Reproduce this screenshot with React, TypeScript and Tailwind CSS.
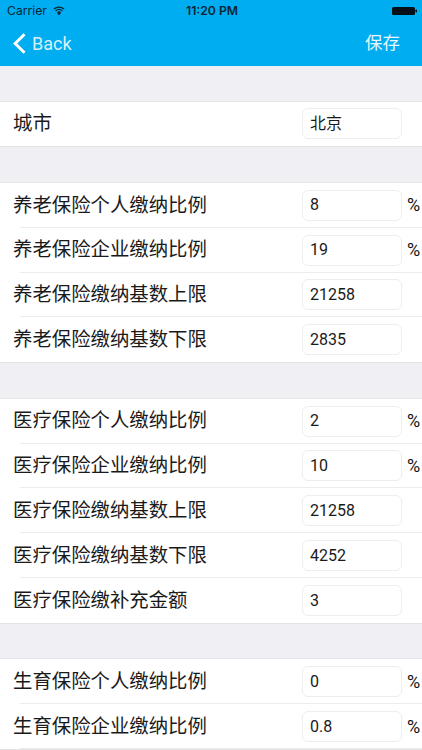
interface RowData {
  label: string
  value: string
  percent?: boolean
}

const groups: RowData[][] = [
  [{ label: '城市', value: '北京' }],
  [
    { label: '养老保险个人缴纳比例', value: '8', percent: true },
    { label: '养老保险企业缴纳比例', value: '19', percent: true },
    { label: '养老保险缴纳基数上限', value: '21258' },
    { label: '养老保险缴纳基数下限', value: '2835' },
  ],
  [
    { label: '医疗保险个人缴纳比例', value: '2', percent: true },
    { label: '医疗保险企业缴纳比例', value: '10', percent: true },
    { label: '医疗保险缴纳基数上限', value: '21258' },
    { label: '医疗保险缴纳基数下限', value: '4252' },
    { label: '医疗保险缴补充金额', value: '3' },
  ],
  [
    { label: '生育保险个人缴纳比例', value: '0', percent: true },
    { label: '生育保险企业缴纳比例', value: '0.8', percent: true },
  ],
]

function Row({ label, value, percent, last }: RowData & { last: boolean }) {
  return (
    <div className="relative flex h-[44.85px] items-center bg-white pl-[13px]">
      <span className="w-[289px] shrink-0 whitespace-nowrap text-[19.4px] leading-none text-[#1a1a1a]">{label}</span>
      <div className="flex h-[31px] w-[100px] shrink-0 items-center rounded-[6px] border border-[#eeeef0] pl-[7px] font-['Roboto','Noto_Sans_CJK_SC',sans-serif] text-[16px] text-[#1a1a1a]">
        {value}
      </div>
      {percent && <span className="ml-[5px] font-['Roboto',sans-serif] text-[18px] leading-none text-[#111]">%</span>}
      {!last && <div className="absolute right-0 bottom-0 left-[20px] h-px bg-[#ececee]" />}
    </div>
  )
}

export default function App() {
  return (
    <div className="h-[750px] w-[422px] overflow-hidden bg-[#efeff4] font-['Inter','Noto_Sans_CJK_SC',sans-serif]">
      <div className="h-[66px] bg-[#00adf1]">
        <div className="flex h-[22px] items-center justify-between pr-[5px] pl-[7px] text-[12.2px] text-[#0b2533]">
          <div className="flex w-[120px] items-center gap-[6px]">
            <span>Carrier</span>
            <svg width="12" height="9" viewBox="0 0 14 10" fill="none" stroke="#0b2533" strokeWidth="1.5">
              <path d="M1 3.4C4.4.4 9.6.4 13 3.4" />
              <path d="M3 5.5c2.3-2 5.7-2 8 0" />
              <path d="M5 7.5c1.2-1 2.8-1 4 0" />
              <path d="M6 8.4 7 9.6l1-1.2c-.6-.4-1.4-.4-2 0z" fill="#0b2533" />
            </svg>
          </div>
          <span className="font-semibold">11:20 PM</span>
          <div className="flex w-[120px] justify-end">
            <svg width="25" height="10" viewBox="0 0 25 10">
              <rect x="0" y="1" width="23" height="8" rx="1.5" fill="#061018" />
              <rect x="23.5" y="3.5" width="1.5" height="3" rx="0.7" fill="#061018" />
            </svg>
          </div>
        </div>
        <div className="flex h-[43px] items-center justify-between pr-[22px] pl-[13px]">
          <div className="flex items-center gap-[6px]">
            <svg width="13" height="21" viewBox="0 0 13 21" fill="none" stroke="#ffffff" strokeWidth="3">
              <path d="M11.5 1.2 2.2 10.5l9.3 9.3" />
            </svg>
            <span className="font-['Roboto',sans-serif] text-[18px] text-[#d5f1fc]">Back</span>
          </div>
          <span className="text-[17.5px] text-[#e6f7fe]">保存</span>
        </div>
      </div>
      <div className="flex flex-col gap-[36.5px] pt-[35.5px]">
        {groups.map((rows, g) => (
          <div key={rows[0].label} className="shadow-[0_-1px_0_#e6e6e9,0_1px_0_#e3e3e6]">
            {rows.map((row, i) => (
              <Row key={row.label} {...row} last={i === rows.length - 1 && g < groups.length - 1} />
            ))}
          </div>
        ))}
      </div>
    </div>
  )
}
